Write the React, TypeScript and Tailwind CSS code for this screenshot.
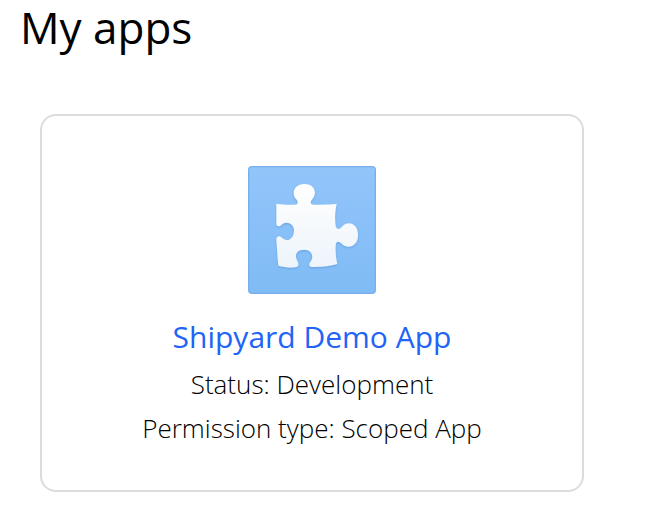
function PuzzleIcon() {
  const piece =
    "M109 137 C126 140 147 141 165 140 C177 138 174 129 166 121 C155 105 162 78 194 78 C224 78 232 105 218 122 C209 132 211 140 222 140 C244 141 268 140 290 138 C285 160 284 184 287 204 C290 216 300 215 307 205 C324 187 354 196 354 231 C354 266 324 274 306 258 C296 248 288 249 287 262 C286 282 288 302 292 318 C270 325 240 328 216 327 C204 325 207 316 213 309 C222 294 215 275 192 275 C169 275 163 292 171 307 C177 317 178 327 165 328 C148 330 130 327 115 323 C112 297 111 270 109 243 C111 233 119 232 127 240 C142 254 162 242 162 218 C162 195 138 188 125 200 C118 207 110 206 109 199 Z";
  return (
    <svg viewBox="24 24 384 384" className="size-32" aria-hidden="true">
      <defs>
        <linearGradient id="tile" x1="0" y1="0" x2="0" y2="1">
          <stop offset="0" stopColor="#92c5fa" />
          <stop offset="1" stopColor="#80bbf5" />
        </linearGradient>
        <linearGradient id="piece" x1="0" y1="0" x2="0" y2="1">
          <stop offset="0" stopColor="#ffffff" />
          <stop offset="1" stopColor="#edf4fb" />
        </linearGradient>
        <filter id="shade" x="-10%" y="-10%" width="120%" height="120%">
          <feDropShadow dx="0" dy="3" stdDeviation="3" floodColor="#3f83c8" floodOpacity="0.5" />
        </filter>
      </defs>
      <rect x="24" y="24" width="384" height="384" rx="12" fill="#75b0ed" />
      <rect x="28" y="28" width="376" height="376" rx="9" fill="url(#tile)" />
      <path d={piece} fill="url(#piece)" filter="url(#shade)" />
    </svg>
  );
}

export default function App() {
  return (
    <main className="bg-white font-['Open_Sans','Noto_Sans',sans-serif] text-black">
      <h1 className="px-5 text-[44px] leading-[54px]">My apps</h1>
      <article className="mt-[60px] mr-[72px] mb-10 ml-10 flex flex-col items-center rounded-2xl border-2 border-[#dcdcdc] px-6 pt-[50px] pb-10 text-center">
        <PuzzleIcon />
        <h2 className="mt-5 text-[30px] leading-[46px]">
          <a href="#shipyard-demo-app" className="text-[#2264f5]">
            Shipyard Demo App
          </a>
        </h2>
        <div className="mt-0.5 text-[26px] leading-[44px] font-light">
          <p>Status: Development</p>
          <p>Permission type: Scoped App</p>
        </div>
      </article>
    </main>
  );
}
